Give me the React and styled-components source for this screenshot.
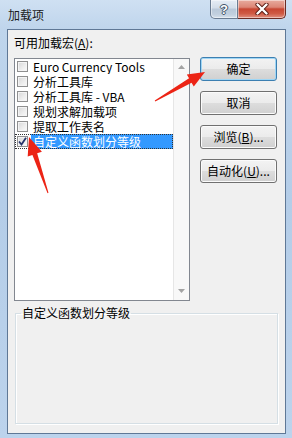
import React from "react";
import styled, { createGlobalStyle } from "styled-components";

const Global = createGlobalStyle`
  html, body { margin: 0; padding: 0; overflow: hidden; background: #fff; }
  * { box-sizing: border-box; }
`;

const FONT = `"Noto Sans CJK SC", "Noto Sans", "Liberation Sans", sans-serif`;

const Window = styled.div`
  position: relative;
  width: 292px;
  height: 438px;
  display: flex;
  flex-direction: column;
  background: linear-gradient(180deg, #cfe0f2 0px, #bfd5ec 29px, #b4cde8 200px, #bcd3ec 438px);
  font-family: ${FONT};
  font-size: 12px;
  color: #000;
  overflow: hidden;
`;

const TitleBar = styled.div`
  height: 29px;
  display: flex;
  align-items: flex-start;
  padding-left: 8px;
`;

const Title = styled.div`
  line-height: 29px;
  font-size: 12px;
  color: #1a1a1a;
`;

const Captions = styled.div`
  margin-left: auto;
  margin-right: 6px;
  display: flex;
`;

const CaptionBtn = styled.div`
  height: 19px;
  width: ${(p) => p.$w}px;
  display: flex;
  align-items: center;
  justify-content: center;
  border: 1px solid ${(p) => (p.$close ? "#6b2c24" : "#6a7c92")};
  border-top: none;
  border-radius: ${(p) => (p.$close ? "0 0 5px 0" : "0 0 0 5px")};
  border-left: ${(p) => (p.$close ? "none" : "1px solid #6a7c92")};
  background: ${(p) =>
    p.$close
      ? "linear-gradient(180deg, #e8ab9e 0%, #dc8676 40%, #c74632 50%, #cf5a44 75%, #e09080 100%)"
      : "linear-gradient(180deg, #e6edf5 0%, #d3dde9 45%, #b9c8d9 50%, #c2d0df 80%, #d6e1ec 100%)"};
  box-shadow: inset 0 0 0 1px rgba(255, 255, 255, 0.45);
`;

const HelpGlyph = styled.span`
  font-family: "Liberation Sans", sans-serif;
  font-weight: bold;
  font-size: 13px;
  line-height: 1;
  color: #fff;
  text-shadow: 0 0 1px #2d3d52, 1px 0 0 #4a5a70, -1px 0 0 #4a5a70, 0 1px 0 #4a5a70, 0 -1px 0 #4a5a70;
`;

const Client = styled.div`
  margin-left: 7px;
  width: 279px;
  height: 405px;
  border: 1px solid #5f7896;
  background: #f0f0f0;
  padding: 5px 7px 0 6px;
  display: flex;
  flex-direction: column;
`;

const Label = styled.div`
  line-height: 16px;
  height: 16px;
`;

const U = styled.span`
  text-decoration: underline;
  text-underline-offset: 1px;
`;

const Row = styled.div`
  margin-top: 6px;
  display: flex;
  align-items: flex-start;
`;

const ListBox = styled.div`
  margin-top: 1px;
  width: 176px;
  height: 243px;
  border: 1px solid #828790;
  background: #fff;
  display: flex;
`;

const List = styled.div`
  flex: 1;
  display: flex;
  flex-direction: column;
  min-width: 0;
`;

const Item = styled.div`
  height: 15px;
  display: flex;
  align-items: center;
  padding-left: 1px;
  outline: ${(p) => (p.$focus ? "1px dotted #333" : "none")};
  outline-offset: -1px;
  white-space: nowrap;
  overflow: hidden;
`;

const Box = styled.div`
  width: 11px;
  height: 11px;
  margin-left: 1px;
  flex: none;
  border: 1px solid #8f8f8f;
  background: linear-gradient(135deg, #d6d6d6 0%, #ececec 55%, #fbfbfb 100%);
  box-shadow: inset 0 0 0 1px #f4f4f4;
  display: flex;
  align-items: center;
  justify-content: center;
`;

const ItemText = styled.span`
  margin-left: 3px;
  padding-left: 2px;
  flex: 1;
  line-height: 15px;
  height: 15px;
  background: ${(p) => (p.$sel ? "#3399ff" : "transparent")};
  color: ${(p) => (p.$sel ? "#fff" : "#000")};
`;

const Scroll = styled.div`
  width: 16px;
  border-left: 1px solid #e6e6e6;
  background: #f8f8f8;
  display: flex;
  flex-direction: column;
  justify-content: space-between;
  align-items: center;
  padding: 6px 0 7px;
`;

const ButtonCol = styled.div`
  margin-left: 10px;
  display: flex;
  flex-direction: column;
  gap: 10px;
`;

const Button = styled.div`
  width: 77px;
  height: 24px;
  border: 1px solid ${(p) => (p.$def ? "#3c7fb1" : "#707070")};
  border-radius: 3px;
  background: linear-gradient(180deg, #f3f3f3 0%, #ebebeb 50%, #dddddd 50%, #d0d0d0 100%);
  box-shadow: inset 0 0 0 1px ${(p) => (p.$def ? "#9fd6f5" : "#fbfbfb")};
  display: flex;
  align-items: center;
  justify-content: center;
  line-height: 16px;
`;

const Group = styled.fieldset`
  margin: 4px 0 0 1px;
  padding: 0;
  width: 263px;
  height: 119px;
  border: 1px solid #d5dfe5;
  box-shadow: 1px 1px 0 #fff, inset 1px 1px 0 #fff;
  min-inline-size: 0;
`;

const Legend = styled.legend`
  margin-left: 5px;
  padding: 0 1px;
  line-height: 16px;
  font-size: 12px;
`;

const Overlay = styled.svg`
  position: absolute;
  left: 0;
  top: 0;
  pointer-events: none;
`;

function Check({ checked }) {
  return (
    <Box>
      {checked && (
        <svg width="9" height="9" viewBox="0 0 9 9">
          <path d="M1 4.5 L3.5 7.5 L8 0.8" fill="none" stroke="#25346a" strokeWidth="1.8" />
        </svg>
      )}
    </Box>
  );
}

const items = [
  "Euro Currency Tools",
  "分析工具库",
  "分析工具库 - VBA",
  "规划求解加载项",
  "提取工作表名",
  "自定义函数划分等级",
];

export default function App() {
  return (
    <>
      <Global />
      <Window>
        <TitleBar>
          <Title>加载项</Title>
          <Captions>
            <CaptionBtn $w={28}>
              <HelpGlyph>?</HelpGlyph>
            </CaptionBtn>
            <CaptionBtn $w={48} $close>
              <svg width="14" height="12" viewBox="0 0 14 12">
                <path d="M2.5 1.5 L11.5 10.5 M11.5 1.5 L2.5 10.5" stroke="#5a1c14" strokeWidth="4.2" strokeLinecap="round" />
                <path d="M2.5 1.5 L11.5 10.5 M11.5 1.5 L2.5 10.5" stroke="#fff" strokeWidth="2.4" strokeLinecap="round" />
              </svg>
            </CaptionBtn>
          </Captions>
        </TitleBar>
        <Client>
          <Label>
            可用加载宏(<U>A</U>):
          </Label>
          <Row>
            <ListBox>
              <List>
                {items.map((t, i) => {
                  const sel = i === items.length - 1;
                  return (
                    <Item key={t} $focus={sel}>
                      <Check checked={sel} />
                      <ItemText $sel={sel}>{t}</ItemText>
                    </Item>
                  );
                })}
              </List>
              <Scroll>
                <svg width="7" height="4" viewBox="0 0 7 4">
                  <path d="M0 4 L3.5 0 L7 4 Z" fill="#a3a3a3" />
                </svg>
                <svg width="7" height="4" viewBox="0 0 7 4">
                  <path d="M0 0 L3.5 4 L7 0 Z" fill="#a3a3a3" />
                </svg>
              </Scroll>
            </ListBox>
            <ButtonCol>
              <Button $def>确定</Button>
              <Button>取消</Button>
              <Button>
                浏览(<U>B</U>)...
              </Button>
              <Button>
                自动化(<U>U</U>)...
              </Button>
            </ButtonCol>
          </Row>
          <Group>
            <Legend>自定义函数划分等级</Legend>
          </Group>
        </Client>
        <Overlay width="292" height="438" viewBox="0 0 292 438">
          <polygon
            points="155.25,101.43 191.55,82.66 193.8,86.56 205,72 186.8,74.44 189.05,78.34 154.75,100.57"
            fill="#ec2415"
          />
          <polygon
            points="48.47,192.84 37.17,153.3 41.9,151.7 29,137 27.7,156.5 32.43,154.9 47.53,193.16"
            fill="#ec2415"
          />
        </Overlay>
      </Window>
    </>
  );
}
